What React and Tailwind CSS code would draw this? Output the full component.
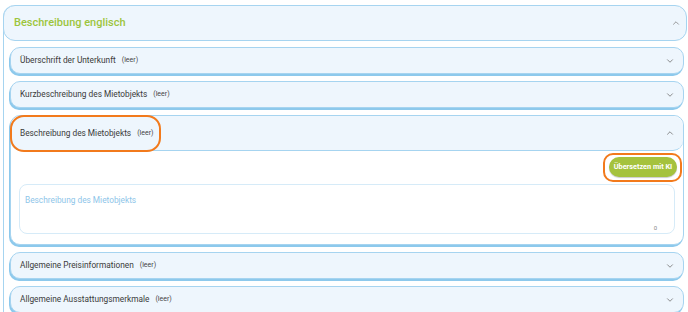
import { ChevronDown, ChevronUp } from 'lucide-react';

function Item({ title }) {
  return (
    <div className="h-[27px] rounded-[10px] border border-[#a6d4f0] bg-[#eef6fd] shadow-[-1px_2px_0_#8dc9ec] flex items-center pl-[9px] pr-[8px]">
      <span className="text-[8.3px] text-[#3a3a3a]">{title}</span>
      <span className="text-[7px] text-[#444] ml-[6px]">(leer)</span>
      <ChevronDown className="ml-auto text-[#777]" size={10} strokeWidth={2} />
    </div>
  );
}

export default function App() {
  return (
    <div className="w-[688px] h-[312px] overflow-hidden bg-white relative" style={{ fontFamily: 'Roboto, "Liberation Sans", sans-serif' }}>
      {/* --- OUTER CARD --- */}
      <div className="ml-[3px] mt-[5px] w-[684px] border-l border-[#a6d4f0] rounded-tl-[12px] h-[400px]">
        <div className="h-[36px] rounded-[12px] border border-[#a6d4f0] bg-[#eef6fd] flex items-center pl-[10px] pr-[5px] -ml-px">
          <span className="text-[11px] font-medium text-[#9dc53c]">Beschreibung englisch</span>
          <ChevronUp className="ml-auto text-[#888]" size={10} strokeWidth={2} />
        </div>

        <div className="pl-[6px] pr-[3px] pt-[6px] flex flex-col gap-[7px]">
          <Item title="Überschrift der Unterkunft" />
          <Item title="Kurzbeschreibung des Mietobjekts" />

          {/* expanded item */}
          <div className="rounded-[10px] border border-[#a6d4f0] shadow-[-1px_2px_0_#8dc9ec] bg-white">
            <div className="h-[35px] rounded-[10px] border-b border-[#a6d4f0] bg-[#eef6fd] flex items-center pl-[9px] pr-[8px]">
              <span className="text-[8.3px] text-[#3a3a3a]">Beschreibung des Mietobjekts</span>
              <span className="text-[7px] text-[#444] ml-[6px]">(leer)</span>
              <ChevronUp className="ml-auto text-[#777]" size={10} strokeWidth={2} />
            </div>
            <div className="px-[8px] pt-[6px] pb-[10px]">
              <div className="flex justify-end">
                <button className="h-[20px] w-[68px] -mr-[2px] rounded-full bg-[#a5c23d] text-white text-[7.3px] font-bold shadow-[0_1px_1px_rgba(0,0,0,0.2)]">
                  Übersetzen mit KI
                </button>
              </div>
              <div className="mt-[7px] h-[50px] rounded-[8px] border border-[#d6ebf8] relative">
                <span className="absolute left-[5px] top-[9px] text-[8.3px] text-[#8ec5e9]">Beschreibung des Mietobjekts</span>
                <span className="absolute right-[17px] bottom-[1px] text-[6px] text-[#888]">0</span>
              </div>
            </div>
          </div>

          <Item title="Allgemeine Preisinformationen" />
          <Item title="Allgemeine Ausstattungsmerkmale" />
        </div>
      </div>

      {/* --- ANNOTATIONS --- */}
      <div className="absolute left-[10px] top-[115px] w-[151px] h-[37px] rounded-[14px] border-[2.5px] border-[#f27a1c]"></div>
      <div className="absolute left-[603px] top-[153px] w-[79px] h-[29px] rounded-[10px] border-[2.5px] border-[#f27a1c]"></div>
    </div>
  );
}
